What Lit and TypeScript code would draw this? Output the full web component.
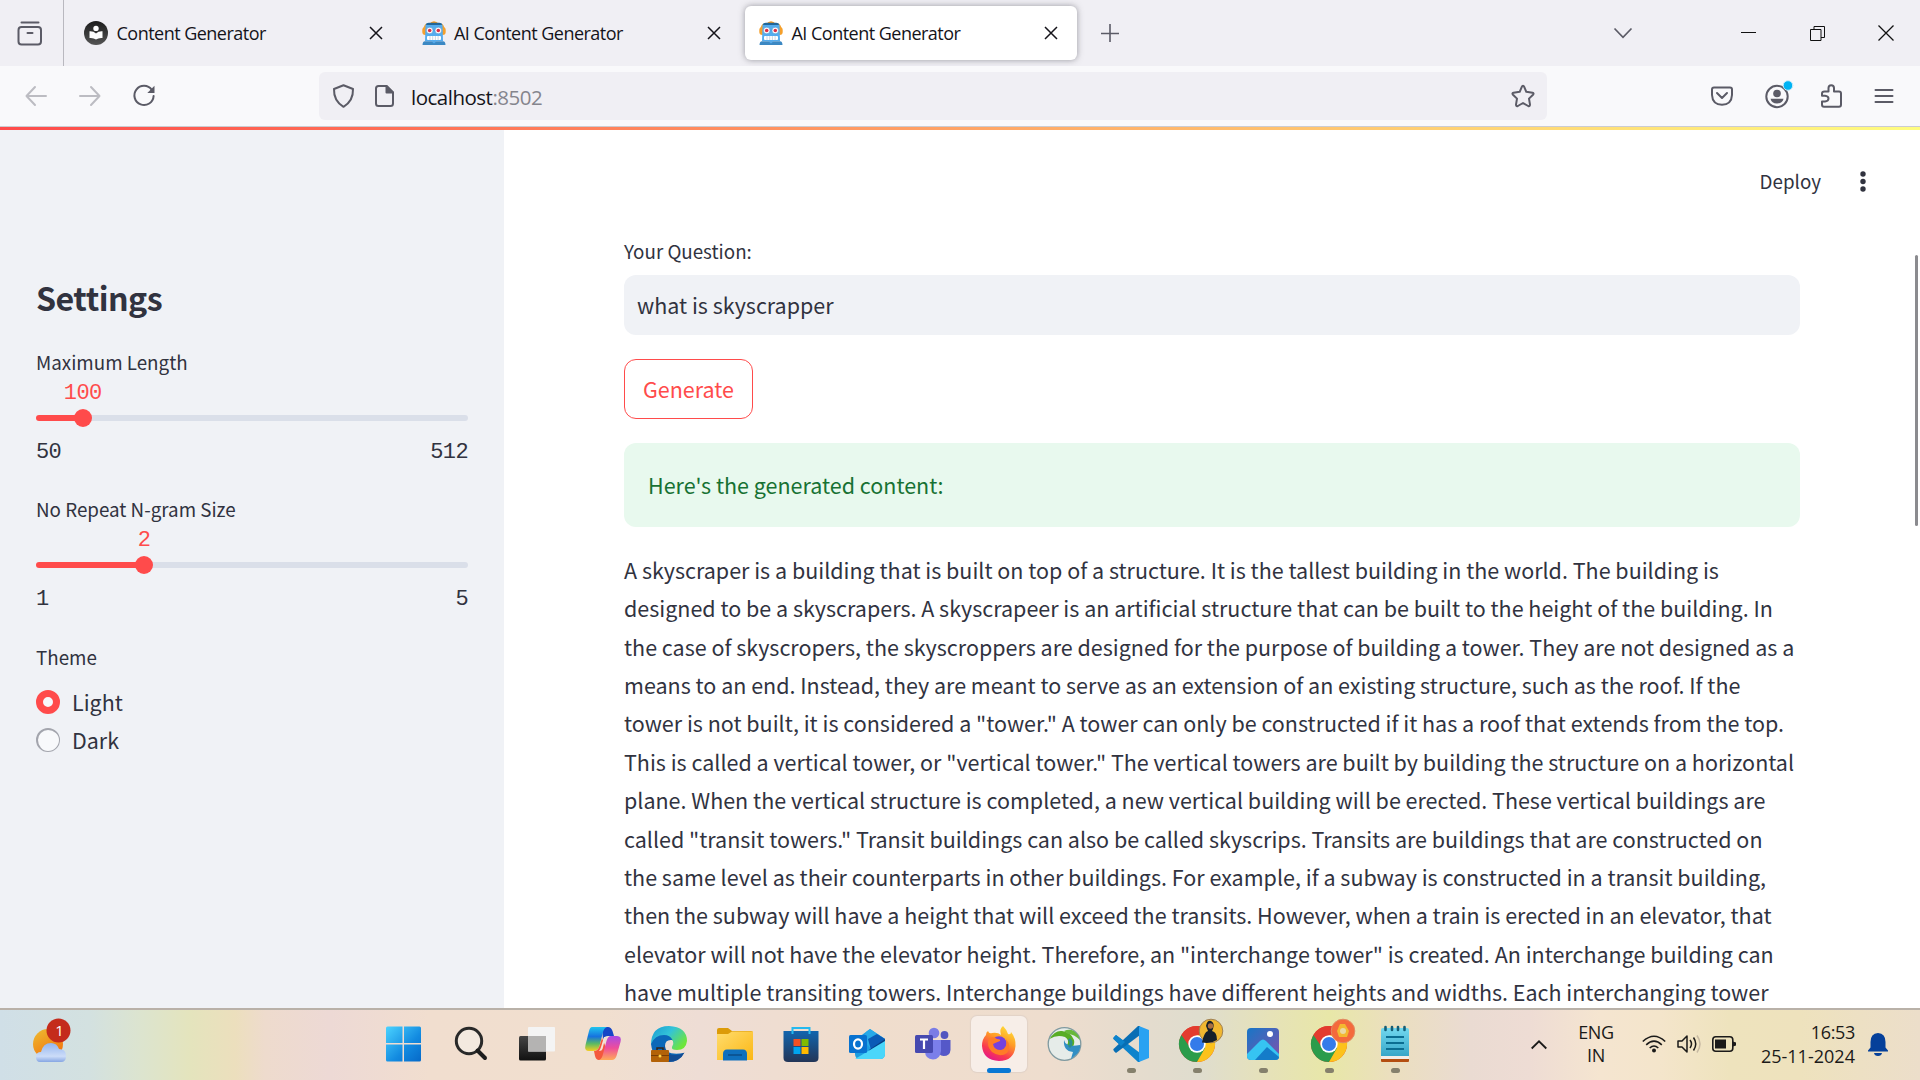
import { LitElement, html, svg, css } from "lit";
import { customElement, property } from "lit/decorators.js";

const robot = html`<svg viewBox="0 0 24 24" width="24" height="24">
  <path d="M7 3Q12-2.500 17 3Z" fill="#f79a1d" /><rect x="0.300" y="6" width="23.400" height="8" rx="3" fill="#f5a02c" />
  <path d="M1.500 8Q2 3 5 2.500L4 14ZM22.500 8Q22 3 19 2.500L20 14Z" fill="#f5a02c" />
  <path d="M3.500 4Q4 2 7 2h10q3 0 3.500 2L21 20H3Z" fill="#55acee" />
  <path d="M4.500 2.500Q5.500 1.800 7 1.800h10q1.500 0 2.500.7L20 4H4Z" fill="#226699" />
  <circle cx="7.700" cy="9.500" r="3.300" fill="#fff" stroke="#3b88c3" stroke-width=".5" /><circle cx="16.300" cy="9.500" r="3.300" fill="#fff" stroke="#3b88c3" stroke-width=".5" />
  <circle cx="7.700" cy="9.500" r="1.800" fill="#dd2e44" /><circle cx="16.300" cy="9.500" r="1.800" fill="#dd2e44" />
  <rect x="5" y="15" width="14" height="4" rx="1" fill="#fff" /><path d="M8 15v4M10.700 15v4M13.400 15v4M16.100 15v4" stroke="#b6c8d8" stroke-width=".7" />
  <path d="M.5 24q0-3.800 2.500-3.800h18q2.500 0 2.500 3.800Z" fill="#3b88c3" /><path d="M9.500 20.200h5L12 22.500Z" fill="#55acee" />
</svg>`;

const reader = html`<svg viewBox="0 0 24 24" width="24" height="24">
  <defs><linearGradient id="rd" x2="0" y2="1"><stop stop-color="#1c1c1c" /><stop offset="1" stop-color="#555" /></linearGradient></defs>
  <circle cx="12" cy="12" r="12" fill="url(#rd)" /><circle cx="12" cy="7.400" r="2.700" fill="#fff" />
  <path d="M5.500 10.300Q9.500 10 12 12.400Q14.500 10 18.500 10.300V17Q14.500 16.600 12 18.600Q9.500 16.600 5.500 17Z" fill="#fff" />
</svg>`;

const cross = html`<svg viewBox="0 0 14 14" width="14" height="14"><path d="M1 1L13 13M13 1L1 13" stroke="#15141a" stroke-width="1.500" /></svg>`;

const line = (w: number, h: number, body: unknown, color = "#5b5b66", sw = 2) => html`
  <svg width=${w} height=${h} viewBox="0 0 ${w} ${h}" fill="none" stroke=${color} stroke-width=${sw} stroke-linecap="round" stroke-linejoin="round">${body}</svg>`;

@customElement("tab-strip")
class TabStrip extends LitElement {
  static styles = css`
    :host { display: flex; height: 66px; background: #f0eff4; align-items: center; font: 18px "Open Sans", "Noto Sans", sans-serif; color: #15141a; }
    svg { display: block; flex: none; }
    .view { width: 64px; height: 66px; border-right: 1px solid #b9b8bf; display: flex; align-items: center; justify-content: center; padding-right: 3px; padding-top: 1px; box-sizing: border-box; }
    .tab { box-sizing: border-box; width: 332px; height: 54px; margin-right: 5.500px; padding: 0 19px 0 14px; display: flex; align-items: center; border-radius: 6px; }
    .first { margin-left: 6px; }
    .active { background: #fff; box-shadow: 0 0 6px rgba(80, 80, 90, .55); }
    .title { flex: 1; margin-left: 8.500px; white-space: nowrap; line-height: 26px; letter-spacing: -.52px; }
    .plus { margin-left: 18.500px; }
    .chevron { margin-left: auto; margin-right: 108px; }
    .win { display: flex; align-items: center; margin-right: 26px; }
    .win .restore { margin: 0 53px 0 54px; }
  `;
  render() {
    const tabs = [
      { icon: reader, title: "Content Generator", cls: "tab first" },
      { icon: robot, title: "AI Content Generator", cls: "tab" },
      { icon: robot, title: "AI Content Generator", cls: "tab active" },
    ];
    return html`
      <div class="view">${line(26, 26, svg`<path d="M4.500 1.500h17"/><rect x="1.500" y="6" width="22.500" height="17.500" rx="3"/><path d="M10.500 12h5"/>`)}</div>
      ${tabs.map((t) => html`<div class=${t.cls}>${t.icon}<span class="title">${t.title}</span>${cross}</div>`)}
      <svg class="plus" width="18" height="18" viewBox="0 0 18 18"><path d="M9 0V18M0 9.500H18" stroke="#5b5b66" stroke-width="1.600" /></svg>
      <svg class="chevron" width="20" height="12" viewBox="0 0 20 12" fill="none" stroke="#5b5b66" stroke-width="1.700"><path d="M1.500 1.500L10 10.300L18.500 1.500" /></svg>
      <div class="win">
        <svg width="15" height="15" viewBox="0 0 15 15"><path d="M0 6.500H15" stroke="#111" stroke-width="1" /></svg>
        <svg class="restore" width="15" height="15" viewBox="0 0 15 15" fill="none" stroke="#111"><path d="M.5 3.500h10.500v11H.5ZM4 3.500V.5h10.500v11H11" /></svg>
        <svg width="16" height="16" viewBox="0 0 16 16"><path d="M.5.5L15.500 15.500M15.500.5L.5 15.500" stroke="#111" stroke-width="1.300" /></svg>
      </div>`;
  }
}

@customElement("nav-bar")
class NavBar extends LitElement {
  static styles = css`
    :host { display: flex; box-sizing: border-box; height: 61px; background: #f9f9fb; border-bottom: 1px solid #ccccd1; align-items: center; }
    svg { display: block; flex: none; overflow: visible; }
    .nav { width: 319px; box-sizing: border-box; padding-left: 25px; display: flex; gap: 32px; align-items: center; }
    .url { width: 1228px; box-sizing: border-box; height: 48px; border-radius: 6px; background: #f0eff4; display: flex; align-items: center; padding: 0 12px 0 13px; }
    .page { margin: 0 17px 0 20px; }
    .address { flex: 1; font: 20.500px/30px "Open Sans", "Noto Sans", sans-serif; padding-top: 2px; letter-spacing: -.5px; color: #15141a; }
    .port { color: #85858d; }
    .tools { margin-left: auto; margin-right: 26px; display: flex; align-items: center; }
    .tools svg + svg { margin-left: 32px; }
  `;
  render() {
    return html`
      <div class="nav">
        ${line(22, 22, svg`<path d="M21 11H1.500M10 2L1.500 11L10 20"/>`, "#bcbcc2")}
        ${line(22, 22, svg`<path d="M1 11H20.500M12 2L20.500 11L12 20"/>`, "#bcbcc2")}
        ${line(22, 22, svg`<path d="M18.800 4.800A9.600 9.600 0 1 0 20.600 11"/><path d="M21.500.8V8H14.300Z" fill="#5b5b66" stroke="none"/>`)}
      </div>
      <div class="url">
        ${line(23, 24, svg`<path d="M11.500 1.200L21 5Q21.400 17 11.500 22.800Q1.600 17 2 5Z"/>`)}
        <svg class="page" width="19" height="22" viewBox="0 0 19 22" fill="none" stroke="#5b5b66" stroke-width="2" stroke-linejoin="round"><path d="M11.500 1H3.500Q1 1 1 3.500v15Q1 21 3.500 21h12Q18 21 18 18.500V7.500Z"/><path d="M11.500 1V7.500H18Z" fill="#5b5b66"/></svg>
        <span class="address">localhost<span class="port">:8502</span></span>
        ${line(24, 24, svg`<path d="M12 1.800Q12.800 1.800 13.200 2.800L15.300 7.800L21.500 8.700Q23.300 9.300 22 10.700L18 14.600L19 20.600Q19 22.700 17.200 22L12 19L6.800 22Q5 22.700 5 20.600L6 14.600L2 10.700Q.7 9.300 2.500 8.700L8.700 7.800L10.800 2.800Q11.200 1.800 12 1.800Z"/>`)}
      </div>
      <div class="tools">
        ${line(22, 20, svg`<path d="M3 1.500H19Q21 1.500 21 3.500V9Q20.500 18.500 11 18.800Q1.500 18.500 1 9V3.500Q1 1.500 3 1.500ZM6 7L11 12L16 7"/>`)}
        ${line(24, 24, svg`<circle cx="12" cy="12.500" r="10.700"/><circle cx="12" cy="9.500" r="3.800" fill="#5b5b66" stroke="none"/><path d="M5.500 14.800H18.500Q17.500 19.500 12 19.500Q6.500 19.500 5.500 14.800Z" fill="#5b5b66" stroke="none"/><circle cx="23" cy="1.500" r="4.800" fill="#00b3f4" stroke="#c8ecfa" stroke-width="1"/>`)}
        ${line(21, 24, svg`<path d="M3.500 7.500H7.500V4Q7.500 1.200 10.200 1.200Q13 1.200 13 4V7.500H18Q20 7.500 20 9.500V20.500Q20 22.800 18 22.800H3Q1 22.800 1 20.500V17.500H4Q7.500 17.200 7.500 14.500Q7.500 12 4 11.700H1V9.500Q1 7.500 3.500 7.500Z"/>`)}
        ${line(20, 16, svg`<path d="M1.500 2H18.500M1.500 8H18.500M1.500 14H18.500"/>`)}
      </div>`;
  }
}

@customElement("range-slider")
class RangeSlider extends LitElement {
  @property() label = "";
  @property({ type: Number }) min = 0;
  @property({ type: Number }) max = 100;
  @property({ type: Number }) value = 0;
  static styles = css`
    :host { display: block; height: 113px; }
    .label { font-size: 18.800px; line-height: 24px; white-space: nowrap; }
    .mono { font-family: "Liberation Mono", monospace; font-size: 22px; line-height: 24px; letter-spacing: -.6px; }
    .row { display: flex; height: 24px; margin-top: 8px; }
    .value { color: #ff4b4b; flex: none; transform: translateX(-50%); margin-right: -80px; }
    .track { height: 18px; margin-top: 3px; display: flex; align-items: center; }
    .fill { height: 6px; background: #ff4b4b; border-radius: 3px 0 0 3px; }
    .thumb { width: 18px; height: 18px; border-radius: 50%; background: #ff4b4b; margin: 0 -9px; z-index: 1; }
    .rest { height: 6px; flex: 1; background: #dadfe9; border-radius: 0 3px 3px 0; }
    .ticks { display: flex; justify-content: space-between; margin-top: 14px; }
  `;
  render() {
    const pct = ((this.value - this.min) / (this.max - this.min)) * 100;
    return html`
      <div class="label">${this.label}</div>
      <div class="row"><div style="width:${pct}%"></div><span class="mono value">${this.value}</span></div>
      <div class="track"><div class="fill" style="width:${pct}%"></div><div class="thumb"></div><div class="rest"></div></div>
      <div class="ticks mono"><span>${this.min}</span><span>${this.max}</span></div>`;
  }
}

@customElement("settings-panel")
class SettingsPanel extends LitElement {
  static styles = css`
    :host { display: flex; flex-direction: column; flex: none; box-sizing: border-box; width: 504px; padding: 146px 36px 0; background: #f0f2f6; }
    .heading { font-size: 32.200px; line-height: 43px; font-weight: 700; margin: 0 0 31px; letter-spacing: -.52px; }
    .first { margin-bottom: 34px; }
    .second { margin-bottom: 35px; }
    .label { font-size: 18.800px; line-height: 24px; margin-bottom: 14px; }
    .option { display: flex; align-items: center; height: 38px; gap: 12px; font-size: 21.485px; line-height: 32px; }
    .dot { box-sizing: border-box; width: 24px; height: 24px; border-radius: 50%; }
    .on { border: 7.500px solid #ff4b4b; background: #f7f8fb; }
    .off { border: 1.500px solid #a3a5ad; border-width: 2px 1px 1px 2px; background: #f8f9fb; }
  `;
  render() {
    return html`
      <h2 class="heading">Settings</h2>
      <range-slider class="first" label="Maximum Length" min="50" max="512" value="100"></range-slider>
      <range-slider class="second" label="No Repeat N-gram Size" min="1" max="5" value="2"></range-slider>
      <div class="label">Theme</div>
      <div class="option"><span class="dot on"></span><span class="text">Light</span></div>
      <div class="option"><span class="dot off"></span><span class="text">Dark</span></div>`;
  }
}

const answer = [
  "A skyscraper is a building that is built on top of a structure. It is the tallest building in the world. The building is",
  "designed to be a skyscrapers. A skyscrapeer is an artificial structure that can be built to the height of the building. In",
  "the case of skyscropers, the skyscroppers are designed for the purpose of building a tower. They are not designed as a",
  "means to an end. Instead, they are meant to serve as an extension of an existing structure, such as the roof. If the",
  "tower is not built, it is considered a \"tower.\" A tower can only be constructed if it has a roof that extends from the top.",
  "This is called a vertical tower, or \"vertical tower.\" The vertical towers are built by building the structure on a horizontal",
  "plane. When the vertical structure is completed, a new vertical building will be erected. These vertical buildings are",
  "called \"transit towers.\" Transit buildings can also be called skyscrips. Transits are buildings that are constructed on",
  "the same level as their counterparts in other buildings. For example, if a subway is constructed in a transit building,",
  "then the subway will have a height that will exceed the transits. However, when a train is erected in an elevator, that",
  "elevator will not have the elevator height. Therefore, an \"interchange tower\" is created. An interchange building can",
  "have multiple transiting towers. Interchange buildings have different heights and widths. Each interchanging tower",
];

@customElement("content-pane")
class ContentPane extends LitElement {
  static styles = css`
    :host { display: flex; flex: 1; min-width: 0; background: #fff; }
    .body { flex: 1; min-width: 0; display: flex; flex-direction: column; }
    .top { flex: none; box-sizing: border-box; height: 104px; display: flex; align-items: center; justify-content: flex-end; gap: 30px; padding-right: 47px; font-size: 18.800px; line-height: 28px; }
    .top span { padding-bottom: 3px; }
    .top svg { padding-bottom: 1px; }
    .form { margin-left: 120px; width: 1176px; padding-top: 5px; }
    .label { font-size: 18.800px; line-height: 24px; margin-bottom: 12px; }
    .field { height: 60px; line-height: 60px; border-radius: 12px; background: #f0f2f6; padding-left: 13px; }
    .go { display: block; box-sizing: border-box; height: 60px; width: 129px; margin: 24px 0; padding: 0 0 2px; border: 1px solid #ff4b4b; border-radius: 12px; background: #fff; color: #ff4b4b; font: inherit; }
    .note { height: 84px; line-height: 83px; border-radius: 12px; background: #e8f9ee; color: #177233; padding-left: 24px; margin-bottom: 23.800px; }
    .line { height: 38.400px; line-height: 38.400px; white-space: nowrap; }
    .scroll { width: 6px; padding-top: 125px; margin-left: -8px; z-index: 1; }
    .bar { width: 3px; height: 271px; border-radius: 2px; background: #8b8b8f; margin-left: 1px; }
  `;
  render() {
    return html`
      <div class="body">
        <div class="top"><span>Deploy</span>
          <svg width="24" height="24" viewBox="0 0 24 24" fill="#31333f"><circle cx="12" cy="4" r="2.700" /><circle cx="12" cy="11.500" r="2.700" /><circle cx="12" cy="19" r="2.700" /></svg>
        </div>
        <div class="form">
          <div class="label">Your Question:</div>
          <div class="field">what is skyscrapper</div>
          <button class="go">Generate</button>
          <div class="note">Here's the generated content:</div>
          ${answer.map((l) => html`<div class="line">${l}</div>`)}
        </div>
      </div>
      <div class="scroll"><div class="bar"></div></div>`;
  }
}

const chrome = svg`
  <circle cx="18" cy="18" r="18" fill="#e33b2e"/>
  <path d="M18 18L2.400 9A18 18 0 0 0 18 36L27 22Z" fill="#2b9c4b"/>
  <path d="M18 36A18 18 0 0 0 33.600 9H18L26 22Z" fill="#fcc21b"/>
  <path d="M2.400 9A18 18 0 0 1 33.600 9H18L10 20Z" fill="#e33b2e"/>
  <circle cx="18" cy="18" r="8.700" fill="#fff"/><circle cx="18" cy="18" r="7" fill="#347bea"/>`;

const appIcons: { art: unknown; state?: string }[] = [
  { art: svg`<defs><linearGradient id="wn" x2="1" y2="1"><stop stop-color="#4bd3ff"/><stop offset=".6" stop-color="#128ae0"/><stop offset="1" stop-color="#0669c8"/></linearGradient></defs><path transform="translate(-1.500 0)" d="M.5 2Q.5.5 2 .5H17V17H.5ZM18.500.5H34Q35.500.5 35.500 2V17H18.500ZM.5 18.500H17V35.500H2Q.5 35.500.5 34ZM18.500 18.500H35.500V34Q35.500 35.500 34 35.500H18.500Z" fill="url(#wn)"/>` },
  { art: svg`<circle cx="16" cy="15" r="12.700" fill="#f3e9df" stroke="#292929" stroke-width="3"/><path d="M24.500 24.500L32 32" stroke="#1d1d1d" stroke-width="4" stroke-linecap="round"/>` },
  { art: svg`<defs><linearGradient id="tv" x2="0" y2="1"><stop stop-color="#454545"/><stop offset="1" stop-color="#111"/></linearGradient></defs><rect x="0" y="10" width="27" height="24.500" rx="1.500" fill="url(#tv)"/><rect x="9" y="1" width="27" height="24.500" rx="1" fill="#f4f4f4"/><path d="M9 10H27V25.500H9Z" fill="#b4b3b2"/>` },
  { art: svg`<defs><linearGradient id="c1" x2="0" y2="1"><stop stop-color="#20c5ee"/><stop offset=".4" stop-color="#1672df"/><stop offset=".7" stop-color="#5dbb62"/><stop offset="1" stop-color="#f5ce20"/></linearGradient><linearGradient id="c2" x2="0" y2="1"><stop stop-color="#a94be6"/><stop offset=".5" stop-color="#ee4d9b"/><stop offset="1" stop-color="#ffab58"/></linearGradient></defs>
    <path d="M17 1H23Q26 1 27.500 5L29 10H23Q19 10 18 14Z" fill="#1646c6"/><path d="M7 1H22Q19 2 18 6L14.500 20Q13 25 8 25H4Q-1 25 .5 19L4 5Q5 1 7 1Z" fill="url(#c1)"/><path d="M9 25Q13 25 14.500 20L17 12L22 24Q20 34 17 34H14Q11 34 10 30Z" fill="#f4583d"/><path d="M26 10H32Q37 10 35.500 16L31.500 30Q30 34 27 34H14Q17 33 18 28L21.500 15Q23 10 26 10Z" fill="url(#c2)"/><path d="M19 11H22Q20 12 19.500 15L17.500 23Q17 25 14 25Q15.500 23 16 21Z" fill="#f5e4da"/>` },
  { art: svg`<defs><linearGradient id="ed" x2="1" y2=".6"><stop stop-color="#189ad3"/><stop offset=".5" stop-color="#33c3d8"/><stop offset="1" stop-color="#6ee63b"/></linearGradient></defs>
    <path d="M0 19Q0 0 18 0Q36 1 36 15Q35 24 26 24Q20 24 21 21Q25 14 17 12Q6 8 0 19Z" fill="url(#ed)"/><path d="M0 18Q4 9 13 9Q19 9 21.500 14Q14 13 14 20Q14 30 33 27Q28 36 18 36Q2 36 0 18Z" fill="#0c68b9"/><path d="M14 18Q13 29 24 29Q29 29 33.500 26.500Q29 36 17 36Q10 32 14 18Z" fill="#124c94"/>
    <path d="M6 24V22H12V24" stroke="#34241a" stroke-width="1.500" fill="none"/><rect x="0" y="24" width="18" height="12" rx="1" fill="#b36208"/><path d="M0 29.500H18" stroke="#7b3f05"/><circle cx="9" cy="30" r="1.500" fill="#ffd54a"/>` },
  { art: svg`<defs><linearGradient id="fo" x2="1" y2="1"><stop stop-color="#ffdc6d"/><stop offset="1" stop-color="#fbb715"/></linearGradient></defs><path d="M0 4Q0 2 2 2H11L15 5H34Q36 5 36 7V12H0Z" fill="#dc9b08"/><path d="M0 8H11L15 5.500H36V34H0Z" fill="url(#fo)"/><path d="M6 34.500V28Q6 23.500 10 23.500H26Q30 23.500 30 28V34.500Z" fill="#0f70bd"/><path d="M11 29H25" stroke="#0b4c88" stroke-width="1.500"/>` },
  { art: svg`<defs><linearGradient id="st" x2="0" y2="1"><stop stop-color="#1265ae"/><stop offset="1" stop-color="#233557"/></linearGradient></defs><path d="M.5 5H35.500V32Q35.500 36 31 36H5Q.5 36 .5 32Z" fill="url(#st)"/><path d="M9.500 8V2H26.500V8" fill="none" stroke="#25b9ef" stroke-width="2"/><path d="M10.500 13h7v7h-7Z" fill="#f25022"/><path d="M18.500 13h7v7h-7Z" fill="#7fba00"/><path d="M10.500 21h7v7h-7Z" fill="#00a4ef"/><path d="M18.500 21h7v7h-7Z" fill="#ffb900"/>` },
  { art: svg`<path d="M6 14L21 3L36 13V27Q36 33 31 33H11Q6 33 6 28Z" fill="#1a9de1"/><path d="M17 6L21 3L36 13L22 23L14 14Z" fill="#28a9e8"/><path d="M19 13L28 8L36 13L22 24Z" fill="#0b5bb6"/><path d="M20 24L36 13V18L22 27Z" fill="#063d83"/><path d="M6 33L36 15V28Q36 33 31 33Z" fill="#4ad6fa"/><rect x="0" y="9" width="18" height="18" rx="1.500" fill="#0872d0"/><ellipse cx="9" cy="18" rx="4" ry="4.700" fill="none" stroke="#fff" stroke-width="2.200"/>` },
  { art: svg`<circle cx="19" cy="7" r="5.300" fill="#7a7ce5"/><circle cx="29.500" cy="9" r="3.900" fill="#5356c0"/><path d="M24 14H35.500V24Q35 30 28.500 30Q26 30 24 28Z" fill="#5558c8"/><path d="M10 14H26V25Q25 33.500 18 33.500Q10 33 10 25Z" fill="#7b7fea"/><rect x="0" y="9" width="18" height="18" rx="1.500" fill="#4649b0"/><path d="M5 13.500H13M9 13.500V23" stroke="#fff" stroke-width="2.200"/>` },
  { state: "active", art: svg`<defs><linearGradient id="ff" x1=".8" x2=".3" y2="1"><stop stop-color="#ffe33b"/><stop offset=".4" stop-color="#ff9b26"/><stop offset=".75" stop-color="#fa3a4e"/><stop offset="1" stop-color="#e3178c"/></linearGradient></defs><path d="M22 0Q26 4 27 8Q30 9 30 6Q35 12 34.500 20Q33 35 18 35Q2 34 1 20Q1 13 5 9Q5 6 7 5Q8 8 11 7Q17 6 20 9Q18 3 22 0Z" fill="url(#ff)"/><circle cx="18" cy="18" r="7.700" fill="#7541dd"/><path d="M8 12Q13 10 16 13Q20 13 19 15Q14 17 12 18Q13 24 20 24Q27 22 25 13Q31 20 26 27Q19 32 11 26Q5 20 8 12Z" fill="#ff7b27"/>` },
  { art: svg`<circle cx="17.500" cy="18" r="16.300" fill="#e6ece9" stroke="#809aa0" stroke-width="1.300"/><path d="M2.500 13Q8 4 15 5Q24 6 27 14Q28 18 25 22L20 19Q23 14 18 11Q10 8 2.500 13Z" fill="#58ad24"/><path d="M17 5Q25 1 31 9L33 14Q27 8 21 8Z" fill="#68b83a"/><path d="M17 14Q19 22 33 19Q34 23 30 28L24 33Q25 29 26 26Q16 25 17 14Z" fill="#328fc4"/><path d="M22 13Q26 17 22 21" fill="none" stroke="#2c8f8d" stroke-width="3"/>` },
  { state: "open", art: svg`<path d="M3 9L27 27V36H25L.5 13Q-.5 12 3 9Z" fill="#0d83cc"/><path d="M3 27L27 9V0H25L.5 23Q-.5 24 3 27Z" fill="#086eb4"/><path d="M3 9L12 16L8 20L.5 13Q-.5 12 3 9Z" fill="#0d83cc"/><path d="M26 0L36 4V32L26 36Z" fill="#29a2f2"/>` },
  { state: "open", art: svg`${chrome}<circle cx="32" cy="5" r="11.800" fill="#f0b730" stroke="#9f8154"/><path d="M23 16.500Q25 6 29 5L27 0Q28-6 32-5Q36-3 34 3L33 5Q38 6 38 14Q32 18 23 16.500Z" fill="#17202a"/><circle cx="31.500" cy="0" r="2.700" fill="#a96f42"/>` },
  { state: "open", art: svg`<defs><linearGradient id="ph" x2="1" y2="1"><stop stop-color="#1776c6"/><stop offset="1" stop-color="#8051ad"/></linearGradient></defs><rect x="2" y="2" width="32" height="32" rx="4" fill="url(#ph)"/><path d="M2 28L15 15Q18 12 21 15L34 28V30Q34 34 30 34H6Q2 34 2 30Z" fill="#36c4f2"/><path d="M10 34L22 21L34 31Q34 34 30 34Z" fill="#147cc9"/><circle cx="25" cy="8" r="3" fill="#fff"/>` },
  { state: "open", art: svg`${chrome}<circle cx="32" cy="5" r="11.800" fill="#f46a3c" stroke="#e28b62"/><path d="M26 5L29-2H34L38 5L36 11H28Z" fill="#f3b831"/><circle cx="32" cy="5" r="3" fill="#ead9a5"/>` },
  { state: "open", art: svg`<defs><linearGradient id="nt" x2="0" y2="1"><stop stop-color="#72d8ef"/><stop offset="1" stop-color="#37a6c8"/></linearGradient></defs><rect x="4" y="29" width="28" height="7" rx="1" fill="#b44e10"/><rect x="4" y="28" width="28" height="5" fill="#f2ede8"/><path d="M4 4Q4 2 6 2H30Q32 2 32 4V30H4Z" fill="url(#nt)"/><path d="M9 11H27M9 17H27M9 23H27" stroke="#0b6d91" stroke-width="2"/><path d="M8.500 1V4M15 1V4M21 1V4M27.500 1V4" stroke="#155e76" stroke-width="2.600" stroke-linecap="round"/>` },
];

@customElement("task-bar")
class TaskBar extends LitElement {
  static styles = css`
    :host { display: flex; box-sizing: border-box; height: 72px; border-top: 2px solid #b9b1a8; color: #1b1a19; font: 18px/24px "Open Sans", "Noto Sans", sans-serif;
      background: linear-gradient(90deg, #d0dfe7 0, #d3e1e0 90px, #dce4cf 140px, #e4e4bd 190px, #ecdfbd 235px, #eedbcd 265px, #edd9d5 330px, #f1decf 430px, #f1dfcf 600px, #eeddd5 700px, #f0ddcd 850px, #eeddce 1050px, #e4dcce 1150px, #dfddce 1200px, #e6e2b8 1270px, #e8e7a8 1330px, #ebdfbe 1390px, #eadbd2 1470px, #eedcd4 1530px, #f5e5d0 1600px, #f4e5cb 1660px, #eee3bd 1730px, #eee2bd 1800px, #ecdeca 1920px); }
    svg { display: block; overflow: visible; flex: none; }
    .weather { width: 372px; box-sizing: border-box; padding: 17px 0 0 33px; }
    .badge { font-size: 15px; fill: #fff; }
    .apps { display: flex; }
    .app { position: relative; width: 66px; height: 68px; display: flex; align-items: center; justify-content: center; }
    .app.active::before { content: ""; position: absolute; inset: 6px 5px 6px; border-radius: 6px; background: #f7eee8; box-shadow: 0 0 1px 1px #e1d2c7; }
    .app svg { position: relative; }
    .app.open::after, .app.active::after { content: ""; position: absolute; bottom: 5px; width: 9px; height: 5px; border-radius: 3px; background: #85806c; }
    .app.active::after { width: 24px; background: #0878d4; }
    .tray { margin-left: auto; display: flex; align-items: center; height: 68px; margin-right: 32px; }
    .lang { text-align: center; width: 48px; margin: 0 22px 0 25px; line-height: 23px; letter-spacing: -.3px; }
    .clock { text-align: right; margin: 0 13px 0 19px; width: 100px; letter-spacing: -.35px; white-space: nowrap; }
    .date { letter-spacing: .02px; }
    .status { display: flex; gap: 11px; align-items: center; }
  `;
  render() {
    return html`
      <div class="weather"><svg width="40" height="44" viewBox="0 0 40 44">
        <defs><linearGradient id="sn" x2=".6" y2="1"><stop stop-color="#edbd32" /><stop offset="1" stop-color="#f3740e" /></linearGradient><linearGradient id="cl" x2="0" y2="1"><stop stop-color="#93b5ef" /><stop offset=".7" stop-color="#ccdcf8" /><stop offset="1" stop-color="#86a6e3" /></linearGradient></defs>
        <circle cx="15" cy="17" r="15" fill="url(#sn)" /><path d="M7 35Q3 35 3 30Q3 25 8 25Q10 16 18 16Q24 16 26 22Q33 22 33 29Q33 35 28 35Z" fill="url(#cl)" />
        <circle cx="25.500" cy="3.500" r="12" fill="#c42b1c" /><text class="badge" x="26.500" y="9" text-anchor="middle">1</text></svg></div>
      <div class="apps">${appIcons.map((a) => html`<div class="app ${a.state ?? ""}"><svg width="36" height="36" viewBox="0 0 36 36">${a.art}</svg></div>`)}</div>
      <div class="tray">
        <svg width="16" height="9" viewBox="0 0 16 9" fill="none" stroke="#1b1a19" stroke-width="1.800"><path d="M.7 8.500L8 1.300L15.300 8.500" /></svg>
        <div class="lang">ENG<br />IN</div>
        <div class="status">
          <svg width="24" height="18" viewBox="0 0 24 18" fill="none" stroke="#1b1a19" stroke-width="1.600"><path d="M.8 6.500Q12-4 23.200 6.500M4.200 9.800Q12 2.500 19.800 9.800M7.700 13Q12 9 16.300 13" /><circle cx="12" cy="15.500" r="2" fill="#1b1a19" stroke="none" /></svg>
          <svg width="24" height="20" viewBox="0 0 24 20" fill="none" stroke="#1b1a19" stroke-width="1.500"><path d="M1 7H5L10 2V18L5 13H1Z" stroke-linejoin="round" /><path d="M13 6Q16 10 13 14M16.500 3.500Q21 10 16.500 16.500" /><path d="M20 1.500Q26 10 20 18.500" stroke="#c6b9a2" /></svg>
          <svg width="24" height="16" viewBox="0 0 24 16"><rect x=".8" y=".8" width="20" height="14.400" rx="3" fill="none" stroke="#1b1a19" stroke-width="1.600" /><rect x="3" y="3.500" width="11" height="9" fill="#1b1a19" /><path d="M21 5.500L24 6.500V9.500L21 10.500Z" fill="#1b1a19" /></svg>
        </div>
        <div class="clock">16:53<br /><span class="date">25-11-2024</span></div>
        <svg width="20" height="23" viewBox="0 0 20 23" fill="#05409a"><path d="M10 0Q17.500.5 17.500 9V14.500L20 17.500V18.500H0V17.500L2.500 14.500V9Q2.500.5 10 0ZM6 20H14Q13.500 23 10 23Q6.500 23 6 20Z" /></svg>
      </div>`;
  }
}

@customElement("app-root")
class AppRoot extends LitElement {
  static styles = css`
    :host { display: flex; flex-direction: column; width: 1920px; height: 1080px; overflow: hidden; }
    .stripe { flex: none; height: 3px; background: linear-gradient(90deg, #ff4b4b, #fffd80); }
    .page { display: flex; height: 878px; overflow: hidden; font: 21.492px "Noto Sans CJK SC", "Noto Sans", sans-serif; color: #31333f; }
    tab-strip, nav-bar, task-bar { flex: none; }
  `;
  render() {
    return html`
      <tab-strip></tab-strip>
      <nav-bar></nav-bar>
      <div class="stripe"></div>
      <div class="page"><settings-panel></settings-panel><content-pane></content-pane></div>
      <task-bar></task-bar>`;
  }
}
